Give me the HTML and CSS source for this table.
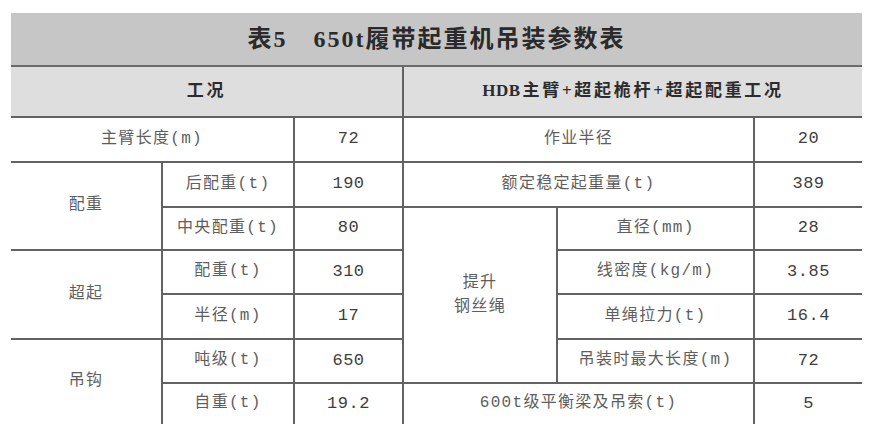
FILE: index.html
```html
<!DOCTYPE html>
<html lang="zh">
<head>
<meta charset="utf-8">
<title>表5 650t履带起重机吊装参数表</title>
<link rel="stylesheet" href="styles.css">
</head>
<body>
<div class="page">
  <table class="params">
    <colgroup>
      <col class="c1"><col class="c2"><col class="c3"><col class="c4"><col class="c5"><col class="c6">
    </colgroup>
    <thead>
      <tr class="title-row"><th colspan="6" class="title">表5<span class="gap"></span>650t履带起重机吊装参数表</th></tr>
      <tr class="head-row"><th colspan="3">工况</th><th colspan="3"><span class="latin">HDB</span>主臂+超起桅杆+超起配重工况</th></tr>
    </thead>
    <tbody>
      <tr class="r1"><td colspan="2">主臂长度(m)</td><td class="num">72</td><td colspan="2">作业半径</td><td class="num">20</td></tr>
      <tr class="r2"><td rowspan="2">配重</td><td>后配重(t)</td><td class="num">190</td><td colspan="2">额定稳定起重量(t)</td><td class="num">389</td></tr>
      <tr class="r3"><td>中央配重(t)</td><td class="num">80</td><td rowspan="4" class="rope">提升<br>钢丝绳</td><td>直径(mm)</td><td class="num">28</td></tr>
      <tr class="r4"><td rowspan="2">超起</td><td>配重(t)</td><td class="num">310</td><td>线密度(kg/m)</td><td class="num">3.85</td></tr>
      <tr class="r5"><td>半径(m)</td><td class="num">17</td><td>单绳拉力(t)</td><td class="num">16.4</td></tr>
      <tr class="r6"><td rowspan="2">吊钩</td><td>吨级(t)</td><td class="num">650</td><td>吊装时最大长度(m)</td><td class="num">72</td></tr>
      <tr class="r7"><td>自重(t)</td><td class="num">19.2</td><td colspan="2">600t级平衡梁及吊索(t)</td><td class="num">5</td></tr>
    </tbody>
  </table>
</div>
</body>
</html>
```

FILE: styles.css
```css
html, body {
  margin: 0;
  padding: 0;
  background: #ffffff;
}

.page {
  padding: 13px 0 0 11px;
}

.params {
  width: 851px;
  border-collapse: collapse;
  table-layout: fixed;
  border-style: hidden;
  font-family: "Liberation Mono", "Noto Sans CJK SC", monospace;
  font-size: 16px;
  letter-spacing: 1.3px;
  color: #5e5e5e;
}

.c1 { width: 151px; }
.c2 { width: 132px; }
.c3 { width: 109px; }
.c4 { width: 154px; }
.c5 { width: 197px; }
.c6 { width: 108px; }

.params th,
.params td {
  padding: 0;
  text-align: center;
  vertical-align: middle;
  border: 2px solid #626262;
  line-height: 1.35;
}

.title-row th {
  background: #c6c6c6;
  height: 51px;
  border-bottom: 2px solid #6a6a6a;
  font-family: "Liberation Serif", "Noto Sans CJK SC", serif;
  font-weight: 700;
  font-size: 24px;
  letter-spacing: 2px;
  color: #2a2a2a;
  padding-top: 1px;
}

.title .gap {
  display: inline-block;
  width: 26px;
}

.head-row th {
  background: #dedede;
  height: 49px;
  font-family: "Liberation Serif", "Noto Sans CJK SC", serif;
  font-weight: 700;
  font-size: 17px;
  letter-spacing: 2.7px;
  color: #2c2c2c;
}

.head-row .latin {
  letter-spacing: 0.5px;
  margin-right: 2px;
}

.params tbody .r1 td { height: 43px; }
.params tbody .r2 td { height: 43px; }
.params tbody .r3 td { height: 41px; }
.params tbody .r4 td { height: 42px; }
.params tbody .r5 td { height: 43px; }
.params tbody .r6 td { height: 42px; }
.params tbody .r7 td { height: 40px; }

.params tbody td.rope {
  height: auto;
  line-height: 1.5;
}

.num {
  color: #3e3e3e;
  letter-spacing: 0.5px;
  font-size: 17px;
}
```
